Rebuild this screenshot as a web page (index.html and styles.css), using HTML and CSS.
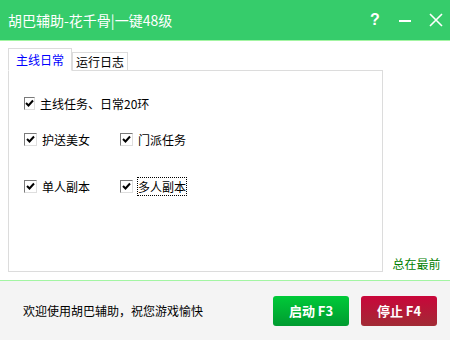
FILE: index.html
```html
<!DOCTYPE html>
<html lang="zh-CN">
<head>
    <meta charset="UTF-8">
    <title>胡巴辅助-花千骨|一键48级</title>
    <link rel="stylesheet" href="styles.css">
</head>
<body>
    <div class="window">
        <div class="titlebar">
            <div class="title">胡巴辅助-花千骨|一键48级</div>
            <div class="controls">
                <span class="ctl help">?</span>
                <svg class="ctl" width="14" height="14" viewBox="0 0 14 14">
                    <rect x="1" y="7" width="12" height="2" fill="#fff"/>
                </svg>
                <svg class="ctl" width="14" height="14" viewBox="0 0 14 14">
                    <path d="M1 1 L13 13 M13 1 L1 13" stroke="#fff" stroke-width="1.6"/>
                </svg>
            </div>
        </div>

        <div class="main">
            <div class="tabs-box">
                <div class="tabs">
                    <div class="tab active">主线日常</div>
                    <div class="tab">运行日志</div>
                </div>
                <div class="panel">
                    <div class="row first">
                        <label class="check"><span class="box"><svg width="9" height="9" viewBox="0 0 9 9"><path d="M1 4 L3.5 6.5 L8 1.5" stroke="#000" stroke-width="2" fill="none"/></svg></span>主线任务、日常20环</label>
                    </div>
                    <div class="row second">
                        <label class="check"><span class="box"><svg width="9" height="9" viewBox="0 0 9 9"><path d="M1 4 L3.5 6.5 L8 1.5" stroke="#000" stroke-width="2" fill="none"/></svg></span>护送美女</label>
                        <label class="check"><span class="box"><svg width="9" height="9" viewBox="0 0 9 9"><path d="M1 4 L3.5 6.5 L8 1.5" stroke="#000" stroke-width="2" fill="none"/></svg></span>门派任务</label>
                    </div>
                    <div class="row third">
                        <label class="check"><span class="box"><svg width="9" height="9" viewBox="0 0 9 9"><path d="M1 4 L3.5 6.5 L8 1.5" stroke="#000" stroke-width="2" fill="none"/></svg></span>单人副本</label>
                        <label class="check"><span class="box"><svg width="9" height="9" viewBox="0 0 9 9"><path d="M1 4 L3.5 6.5 L8 1.5" stroke="#000" stroke-width="2" fill="none"/></svg></span><span class="focus">多人副本</span></label>
                    </div>
                </div>
            </div>
            <div class="side">
                <span class="topmost">总在最前</span>
            </div>
        </div>

        <div class="footer">
            <div class="welcome">欢迎使用胡巴辅助，祝您游戏愉快</div>
            <div class="buttons">
                <button class="btn start">启动 F3</button>
                <button class="btn stop">停止 F4</button>
            </div>
        </div>
    </div>
</body>
</html>
```

FILE: styles.css
```css
body {
    margin: 0;
    font-family: "Noto Sans CJK SC", "Liberation Sans", sans-serif;
    font-size: 12px;
    color: #000;
}
.window {
    width: 450px;
    height: 340px;
    display: flex;
    flex-direction: column;
    background: #fff;
}
.titlebar {
    height: 40px;
    background: #36cc6b;
    border-bottom: 1px solid #a3f5a3;
    display: flex;
    align-items: center;
    justify-content: space-between;
    padding: 0 7px 0 8px;
    color: #fff;
}
.title {
    font-size: 14px;
}
.controls {
    display: flex;
    align-items: center;
    gap: 17px;
}
.ctl {
    display: block;
}
.help {
    font-family: "Liberation Sans", sans-serif;
    font-size: 16px;
    font-weight: bold;
    width: 12px;
    text-align: center;
}
.main {
    flex: 1;
    display: flex;
    padding: 7px 0 8px 8px;
    border-bottom: 1px solid #a3f5a3;
}
.tabs-box {
    width: 375px;
    display: flex;
    flex-direction: column;
}
.tabs {
    display: flex;
    align-items: flex-end;
    margin-bottom: -1px;
}
.tab {
    height: 18px;
    line-height: 18px;
    padding: 0 3px;
    border: 1px solid #dcdcdc;
    border-bottom: none;
    background: #fff;
}
.tab.active {
    height: 21px;
    line-height: 22px;
    padding: 0 7px;
    color: #0000ff;
    position: relative;
    z-index: 1;
    border-bottom: 1px solid #fff;
}
.panel {
    flex: 1;
    border: 1px solid #dcdcdc;
    padding: 21px 0 0 15px;
    display: flex;
    flex-direction: column;
}
.row {
    display: flex;
    height: 23px;
    align-items: center;
}
.row.second {
    margin-top: 13px;
}
.row.third {
    margin-top: 24px;
}
.check {
    width: 96px;
    display: flex;
    align-items: center;
    gap: 5px;
    white-space: nowrap;
}
.box {
    width: 11px;
    height: 11px;
    border: 1px solid #7a7a7a;
    border-right-color: #dedede;
    border-bottom-color: #dedede;
    background: #fff;
    display: flex;
    align-items: center;
    justify-content: center;
}
.focus {
    outline: 1px dotted #000;
}
.side {
    flex: 1;
    display: flex;
    align-items: flex-end;
    justify-content: center;
}
.topmost {
    color: #008000;
    font-size: 12px;
    line-height: 14px;
    margin-bottom: 1px;
}
.footer {
    height: 59px;
    background: #f4f4f4;
    display: flex;
    align-items: center;
    justify-content: space-between;
    padding: 0 13px 0 23px;
}
.buttons {
    display: flex;
    gap: 12px;
}
.btn {
    width: 76px;
    height: 30px;
    border: none;
    border-radius: 3px;
    color: #fff;
    font-family: "Noto Sans CJK SC", "Liberation Sans", sans-serif;
    font-size: 13px;
    font-weight: bold;
    padding: 0;
}
.start {
    background: linear-gradient(#00ca38, #009b30);
}
.stop {
    background: linear-gradient(#c9063a, #a12b35);
}
```
